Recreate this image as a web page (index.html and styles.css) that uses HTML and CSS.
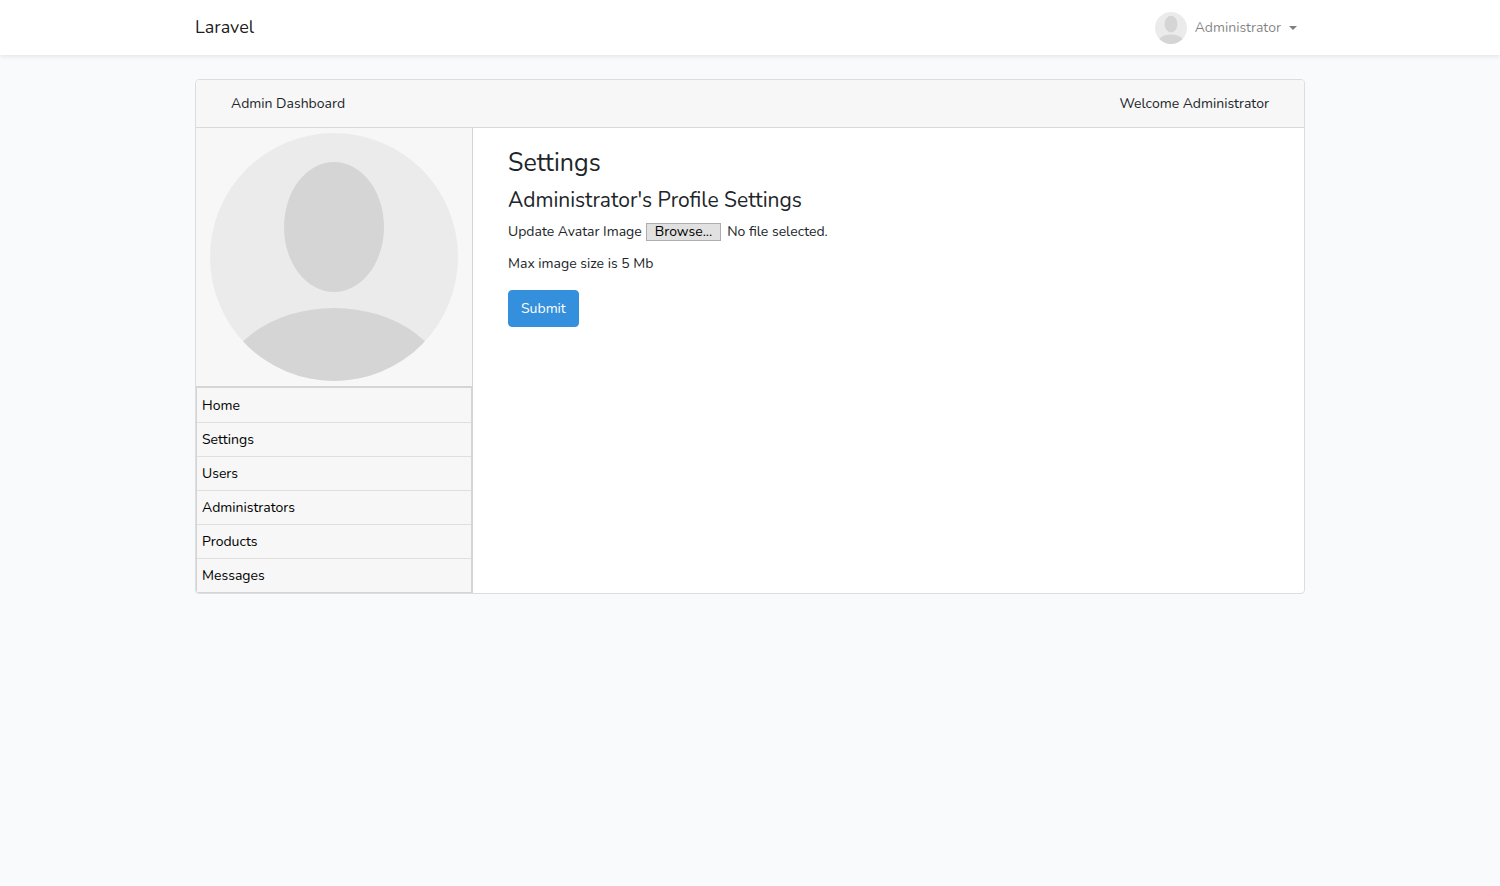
FILE: index.html
```html
<!DOCTYPE html>
<html lang="en">
<head>
<meta charset="utf-8">
<meta name="viewport" content="width=device-width, initial-scale=1">
<title>Laravel</title>
<link rel="stylesheet" href="styles.css">
</head>
<body>
<svg width="0" height="0" class="sprite" aria-hidden="true">
  <symbol id="avatar" viewBox="0 0 248 248">
    <clipPath id="round"><circle cx="124" cy="124" r="124"/></clipPath>
    <g clip-path="url(#round)">
      <rect width="248" height="248" fill="#ebebeb"/>
      <ellipse cx="124" cy="94" rx="50" ry="65" fill="#d5d5d5"/>
      <ellipse cx="124" cy="261" rx="115" ry="86" fill="#d5d5d5"/>
    </g>
  </symbol>
</svg>
<header class="navbar">
  <div class="container navbar-inner">
    <a class="brand" href="#">Laravel</a>
    <button class="user-menu" type="button" aria-haspopup="true">
      <svg class="user-avatar" aria-hidden="true"><use href="#avatar"/></svg>
      <span>Administrator</span>
      <span class="caret"></span>
    </button>
  </div>
</header>
<main class="container main">
  <section class="card">
    <div class="card-header">
      <span>Admin Dashboard</span>
      <span>Welcome Administrator</span>
    </div>
    <div class="card-body">
      <aside class="sidebar">
        <div class="portrait"><svg viewBox="0 0 248 248" role="img" aria-label="Avatar"><use href="#avatar"/></svg></div>
        <nav class="menu">
          <a href="#">Home</a>
          <a href="#">Settings</a>
          <a href="#">Users</a>
          <a href="#">Administrators</a>
          <a href="#">Products</a>
          <a href="#">Messages</a>
        </nav>
      </aside>
      <div class="content">
        <h1>Settings</h1>
        <h2>Administrator's Profile Settings</h2>
        <form>
          <div class="file-row">
            <label for="image">Update Avatar Image</label>
            <div class="file-picker">
              <span class="browse">Browse...</span>
              <span>No file selected.</span>
              <input id="image" type="file">
            </div>
          </div>
          <p>Max image size is 5 Mb</p>
          <button class="submit" type="submit">Submit</button>
        </form>
      </div>
    </div>
  </section>
</main>
</body>
</html>
```
FILE: styles.css
```css
*, *::before, *::after { box-sizing: border-box; }
body {
  margin: 0;
  background: #f8fafc;
  color: #212529;
  font-family: Nunito, Lato, sans-serif;
  font-size: 14px;
  line-height: 23px;
}
a { color: inherit; text-decoration: none; }
button { font: inherit; cursor: pointer; }
.sprite { display: block; }
.container { width: 100%; max-width: 1140px; margin: 0 auto; padding: 0 15px; }

.navbar { background: #fff; box-shadow: 0 2px 4px rgba(0, 0, 0, .075); }
.navbar-inner { display: flex; align-items: center; justify-content: space-between; min-height: 55px; }
.brand { color: rgba(0, 0, 0, .9); font-size: 18px; }
.user-menu {
  display: flex;
  align-items: center;
  gap: 8px;
  padding: 0 8px;
  border: 0;
  background: none;
  color: rgba(0, 0, 0, .5);
}
.user-avatar { width: 32px; height: 32px; }
.caret { border: 4px solid transparent; border-top-color: currentColor; border-bottom: 0; }

.main { padding-top: 24px; padding-bottom: 24px; }
.card { overflow: hidden; border: 1px solid #dcddde; border-radius: 4px; background: #fff; }
.card-header {
  display: flex;
  justify-content: space-between;
  padding: 12px 35px;
  border-bottom: 1px solid #d9d9d9;
  background: #f7f7f7;
}
.card-body { display: grid; grid-template-columns: 1fr 3fr; }
.sidebar { border-right: 1px solid #d5d5d5; background: #f7f7f7; }
.portrait { padding: 5px 14px; }
.portrait svg { display: block; width: 100%; }
.menu { padding-top: 1px; border: 1px solid #d5d5d5; border-top-width: 2px; color: #000; }
.menu a { display: block; padding: 5px; border-bottom: 1px solid #dfdfdf; }
.menu a:last-child { border-bottom: 0; }

.content { padding: 20px 35px; }
h1, h2 { margin: 0 0 8px; font-weight: 400; }
h1 { font-size: 25px; line-height: 30px; }
h2 { margin-bottom: 6px; font-size: 21px; line-height: 28px; }
.file-row, .file-picker { display: flex; align-items: baseline; }
.file-row { gap: 4px; }
.file-picker { position: relative; gap: 6px; }
.file-picker input { position: absolute; inset: 0; width: 100%; opacity: 0; cursor: pointer; }
.browse {
  padding: 0 8px;
  border: 1px solid #adadad;
  background: #e1e1e1;
  color: #000;
  line-height: 16px;
}
p { margin: 9px 0 15px; }
.submit {
  padding: 6px 12px;
  border: 1px solid #3490dc;
  border-radius: 4px;
  background: #3490dc;
  color: #fff;
}
```
